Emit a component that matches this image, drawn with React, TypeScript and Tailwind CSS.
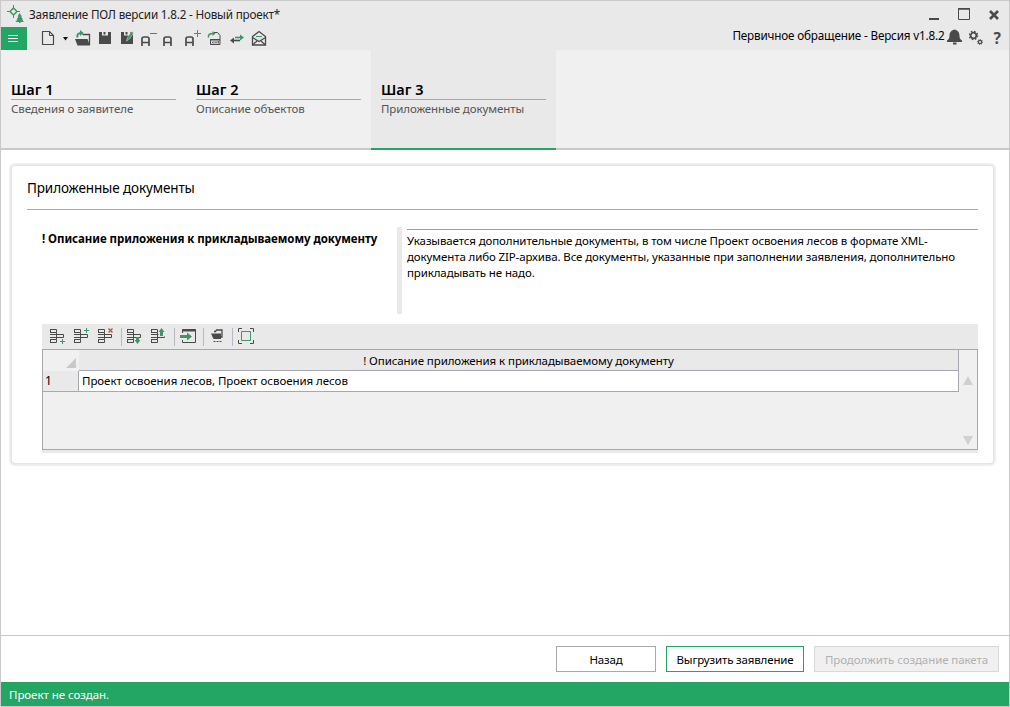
import type { ReactNode } from "react";

const DARK = "#4a4a4a";
const GREEN = "#3f9568";
const RED = "#b9553b";

function Icon({ w = 22, h = 23, children }: { w?: number; h?: number; children: ReactNode }) {
  return (
    <svg width={w} height={h} viewBox={`0 0 ${w} ${h}`} fill="none" className="shrink-0">
      {children}
    </svg>
  );
}

function Logo() {
  return (
    <Icon w={18} h={18}>
      <path d="M6.500 3 10 6.500 6.500 10 3 6.500Z" stroke={GREEN} strokeWidth="1.500" />
      <path d="M6.500 0v4M6.500 9v4M0 6.500h4M9 6.500h4" stroke={GREEN} />
      <path d="m12.500 8-2 3.500h1l-2 3h1l-2 2.500h3.500v1h1.500v-1h3.500l-2-2.500h1l-2-3h1Z" fill={GREEN} />
    </Icon>
  );
}

// slots are 22px wide, glyphs keep their own offset inside the slot
function LetterA() {
  return <path d="M4 19v-7q0-2 2-2h3q2 0 2 2V19M4 15.500h7" stroke={DARK} strokeWidth="1.700" />;
}

function SaveGlyph() {
  return <path d="M5 5h3v3.500h6V5h3v12H5ZM9.500 5h2v2.500h-2Z" fill={DARK} />;
}

function MainToolbar() {
  return (
    <div className="flex items-center">
      <Icon w={16}>
        <path d="M1.500 4.500h7l4 4v9h-11Z" stroke={DARK} strokeWidth="1.200" />
        <path d="M8.500 4.500v4h4" stroke={DARK} />
      </Icon>
      <Icon w={15}>
        <path d="M6 10h5L8.500 13.500Z" fill="#111" />
      </Icon>
      <Icon>
        <path d="M3 12h12.500l2.500 6.500H5.500Z" fill={DARK} />
        <path d="M10.500 7.500h7V18" stroke={DARK} strokeWidth="1.300" />
        <path d="M5.500 10.500c-1-3.500 1-4.500 5-4.500" stroke={GREEN} strokeWidth="2" />
        <path d="M8 3v6l3.500-3Z" fill={GREEN} />
      </Icon>
      <Icon>
        <SaveGlyph />
      </Icon>
      <Icon>
        <SaveGlyph />
        <path d="m10.500 14 1-3.500 4-6 2 1.500-4 6Z" fill={GREEN} stroke="#c9d8cf" strokeWidth=".6" />
      </Icon>
      <Icon>
        <LetterA />
        <path d="M12 6.500h7" stroke={RED} />
      </Icon>
      <Icon>
        <LetterA />
      </Icon>
      <Icon>
        <LetterA />
        <path d="M12 6.500h7M15.500 3v7" stroke={GREEN} />
      </Icon>
      <Icon>
        <path d="M10 5.500h3.500l2.500 3v9H6.500V12" stroke={DARK} />
        <path d="M6 12h10v1.500H6Z" fill={DARK} />
        <path d="M8 14.500l1.500 2m0-2L8 16.500M11 16.500v-2l1 1 1-1v2M14.500 14v2.500" stroke={DARK} strokeWidth=".8" />
        <path d="M4.500 10.500c-.5-3 1-4 5-4" stroke={GREEN} strokeWidth="1.500" />
        <path d="M8.500 4v5l3-2.500Z" fill={GREEN} />
      </Icon>
      <Icon>
        <path d="M9 10.500h6" stroke={GREEN} strokeWidth="1.600" />
        <path d="M14 7.500v6l4-3Z" fill={GREEN} />
        <path d="M8 13.500h6" stroke={DARK} strokeWidth="1.600" />
        <path d="M8 10.500v6l-4-3Z" fill={DARK} />
      </Icon>
      <Icon>
        <path d="M4.500 9.500 11 4.500l6.500 5v8.500h-13Z" stroke={DARK} strokeWidth="1.300" />
        <path d="M7 9h8v2.500L11 14l-4-2.500Z" fill="#dbe8e0" />
        <path d="m4.500 10.500 6.500 4 6.500-4M4.500 18l4.500-4M17.500 18 13 14" stroke={DARK} strokeWidth="1.200" />
        <path d="M8 9.500h6" stroke={GREEN} />
      </Icon>
    </div>
  );
}

function RowsGlyph() {
  return (
    <path
      d="M5 5.500h6.500v3H5M5 15.500h6.500v3H5M5.500 5v4M5.500 15v4M11.500 10.500h7v3h-7ZM11.500 8.500v7M5 10.500h6M5 13.500h6"
      stroke={DARK}
    />
  );
}

function Separator() {
  return <div className="h-[18px] w-px shrink-0 bg-[#b4b9c3]" />;
}

function GridToolbar() {
  return (
    <div className="flex h-[25px] items-center bg-[#e9e9e9] pl-[3px]">
      <Icon w={24} h={25}>
        <RowsGlyph />
        <path d="M14 14.500h6v6h-6Z" fill="#e9e9e9" />
        <path d="M15 17.500h5M17.500 15v5" stroke={GREEN} />
      </Icon>
      <Icon w={24} h={25}>
        <RowsGlyph />
        <path d="M15 6.500h5M17.500 4v5" stroke={GREEN} />
      </Icon>
      <Icon w={28} h={25}>
        <RowsGlyph />
        <path d="m15.500 4.500 4 4M19.500 4.500l-4 4" stroke={RED} strokeWidth="1.400" />
      </Icon>
      <Separator />
      <Icon w={24} h={25}>
        <RowsGlyph />
        <path d="M14 13h3v3h1.500l-3 4-3-4H14Z" fill={GREEN} />
      </Icon>
      <Icon w={28} h={25}>
        <RowsGlyph />
        <path d="M12.500 3H21v9.500h-8.500Z" fill="#e9e9e9" />
        <path d="m15.500 4 3 4H17v4h-3V8h-1.500Z" fill={GREEN} />
      </Icon>
      <Separator />
      <Icon w={28} h={25}>
        <path d="M7.500 9V5.500h13v13h-13V16" stroke={DARK} />
        <path d="M7 6.500h14" stroke={DARK} strokeWidth="2" />
        <path d="M5 11h7V8.500l5 4-5 4V14H5Z" fill={GREEN} />
      </Icon>
      <Separator />
      <Icon w={28} h={25}>
        <path d="M7 9.500h10v5.500H9.500Z" fill={DARK} />
        <path d="M10 7.500h1.500l1-1.500H18v7h-1.500" stroke={DARK} strokeWidth="1.300" />
        <path d="M9.500 17.500h2m1 0h2m1 0h2" stroke={DARK} strokeWidth="1.200" />
      </Icon>
      <Separator />
      <Icon w={28} h={25}>
        <path d="M5.500 8V4.500H9M17 4.500h3.500V8M20.500 16v3.500H17M9 19.500H5.500V16" stroke={DARK} />
        <path d="M8.500 7.500h9v9h-9Z" stroke={GREEN} />
      </Icon>
    </div>
  );
}

const steps = [
  { title: "Шаг 1", text: "Сведения о заявителе" },
  { title: "Шаг 2", text: "Описание объектов" },
  { title: "Шаг 3", text: "Приложенные документы", active: true },
];

function Steps() {
  return (
    <nav className="flex h-[100px] shrink-0 border-b-2 border-[#c9c9c9] bg-[#f0f0f0]">
      {steps.map((step) => (
        <div
          key={step.title}
          className={
            step.active
              ? "-mb-0.5 w-[185px] border-b-2 border-[#23a564] bg-[#e9e9e9] px-2.5 pt-[30px]"
              : "w-[185px] px-2.5 pt-[30px]"
          }
        >
          <div className="h-5 border-b border-[#a8a8a8] text-[14.500px] leading-[19px] font-semibold">{step.title}</div>
          <div className="text-[11.500px] leading-[18px] tracking-[-0.09px] whitespace-nowrap text-[#555]">
            {step.text}
          </div>
        </div>
      ))}
    </nav>
  );
}

function DocumentsTable() {
  return (
    <div className="bg-[#e9e9e9] pb-[3px]">
      <GridToolbar />
      <div className="flex h-[101px] border border-[#a8a8ab] bg-[#f0f0f0]">
        <div className="flex-1">
          <div className="flex h-[21px] border-r border-[#a8a8b0]">
            <div className="flex w-9 items-end justify-end pr-[3px] pb-[3px]">
              <svg width="10" height="10" viewBox="0 0 10 10">
                <path d="M10 0v10H0Z" fill="#c9c9c9" />
              </svg>
            </div>
            <div className="flex-1 border-b border-[#a8a8b0] bg-[#e9e9e9] text-center leading-[22px] tracking-[-0.08px]">
              ! Описание приложения к прикладываемому документу
            </div>
          </div>
          <div className="flex h-[21px] border-r border-b border-[#a8a8b0]">
            <div className="w-9 border-r border-[#a8a8b0] bg-[#e9e9e9] pl-0.5 text-[12px] leading-[20px]">1</div>
            <div className="flex-1 bg-white pl-[3px] leading-[19px] tracking-[-0.05px]">
              Проект освоения лесов, Проект освоения лесов
            </div>
          </div>
        </div>
        <div className="flex w-[18px] flex-col items-center justify-between pt-[26px] pb-1">
          <svg width="10" height="9" viewBox="0 0 10 9">
            <path d="M5 0 10 9H0Z" fill="#d0d0d0" />
          </svg>
          <svg width="10" height="9" viewBox="0 0 10 9">
            <path d="M0 0h10L5 9Z" fill="#d0d0d0" />
          </svg>
        </div>
      </div>
    </div>
  );
}

export default function App() {
  return (
    <div className="flex h-[707px] w-[1010px] flex-col overflow-hidden border border-[#c9c9c9] bg-white font-['Noto_Sans','Open_Sans',sans-serif] text-[11.500px] text-black">
      <header className="flex h-[49px] shrink-0 justify-between bg-[#e9e9e9]">
        <div>
          <div className="flex h-[26px] items-center pl-1.5">
            <Logo />
            <span className="ml-1 text-[11.700px] leading-[27px] tracking-[-0.19px] text-[#222]">
              Заявление ПОЛ версии 1.8.2 - Новый проект*
            </span>
          </div>
          <div className="flex h-[23px]">
            <div className="mr-[14px] flex w-[26px] flex-col items-start justify-center gap-0.5 bg-[#23a564] pl-[7px]">
              <div className="h-px w-[10px] bg-white" />
              <div className="h-px w-[10px] bg-white" />
              <div className="h-px w-[10px] bg-white" />
            </div>
            <MainToolbar />
          </div>
        </div>
        <div className="flex flex-col items-end">
          <div className="flex h-[24px] gap-[19px] pr-[9px]">
            <Icon w={10} h={24}>
              <path d="M0 18h10" stroke={DARK} strokeWidth="2" />
            </Icon>
            <Icon w={12} h={24}>
              <path d="M.5 7.500h11v11H.5Z" stroke={DARK} />
              <path d="M0 8h12" stroke={DARK} strokeWidth="1.500" />
            </Icon>
            <Icon w={11} h={24}>
              <path d="m1 10 8 8M9 10l-8 8" stroke={DARK} strokeWidth="2.600" />
            </Icon>
          </div>
          <div className="flex h-[25px] pr-2">
            <span className="mr-0.5 text-[11.700px] leading-[21px] tracking-[-0.16px]">
              Первичное обращение - Версия v1.8.2
            </span>
            <Icon w={22} h={25}>
              <path
                d="M7.500 4.500c4 1 5 3.500 5 6.500 0 2.500 1 3.500 2.500 4.500v1.500H0v-1.500C1.500 14.500 2.500 13.500 2.500 11c0-3 1-5.500 5-6.500ZM6 17.500h3.500v2H6Z"
                fill={DARK}
              />
            </Icon>
            <Icon w={25} h={25}>
              <circle cx="4.500" cy="10.500" r="2.800" stroke={DARK} strokeWidth="1.700" />
              <circle cx="4.500" cy="10.500" r="4.200" stroke={DARK} strokeWidth="1.200" strokeDasharray="1.650 1.650" />
              <circle cx="11" cy="17" r="1.700" stroke={DARK} strokeWidth="1.300" />
              <circle cx="11" cy="17" r="2.600" stroke={DARK} strokeWidth=".8" strokeDasharray="1 1" />
            </Icon>
            <span className="text-[15.500px] leading-[27px] font-bold text-[#4a4a4a]">?</span>
          </div>
        </div>
      </header>

      <Steps />

      <main className="flex-1 pt-4 pl-[11px]">
        <section className="h-[297px] w-[981px] rounded-[3px] bg-white px-[15px] shadow-[0_0_2px_1px_#e0e0e0,0_0_1px_3px_#f0f0f0]">
          <h2 className="h-11 border-b border-[#a8a8a8] text-[13.500px] leading-[45px] tracking-[-0.12px]">
            Приложенные документы
          </h2>
          <div className="mt-[17px] ml-[15px] flex h-[87px]">
            <div className="w-[355px] pt-[3px] leading-[18px] font-bold tracking-[-0.06px] whitespace-nowrap">
              ! Описание приложения к прикладываемому документу
            </div>
            <div className="mr-[5px] w-[5px] bg-[#e9e9e9]" />
            <div className="flex-1 pt-0.5">
              <p className="border-t border-[#a0a0a0] pt-[3px] leading-4 tracking-[-0.12px] whitespace-nowrap">
                Указывается дополнительные документы, в том числе Проект освоения лесов в формате XML-
                <br />
                документа либо ZIP-архива. Все документы, указанные при заполнении заявления, дополнительно
                <br />
                прикладывать не надо.
              </p>
            </div>
          </div>
          <div className="mt-[10px] ml-[15px]">
            <DocumentsTable />
          </div>
        </section>
      </main>

      <footer className="shrink-0">
        <div className="flex h-[47px] justify-end gap-2.5 border-t border-[#c9c9c9] pt-2.5 pr-[10px] tracking-[-0.15px]">
          <button className="h-[26px] w-[100px] border border-[#a8a8b0] pt-0.5">Назад</button>
          <button className="h-[26px] w-[138px] border border-[#23a564] pt-0.5">Выгрузить заявление</button>
          <button className="h-[26px] w-[185px] border border-[#d9d9d9] bg-[#f0f0f0] pt-0.5 tracking-[-0.08px] text-[#b0b0b0]">
            Продолжить создание пакета
          </button>
        </div>
        <div className="h-6 bg-[#23a564] pl-2 leading-[25px] tracking-[-0.05px] text-white">Проект не создан.</div>
      </footer>
    </div>
  );
}
